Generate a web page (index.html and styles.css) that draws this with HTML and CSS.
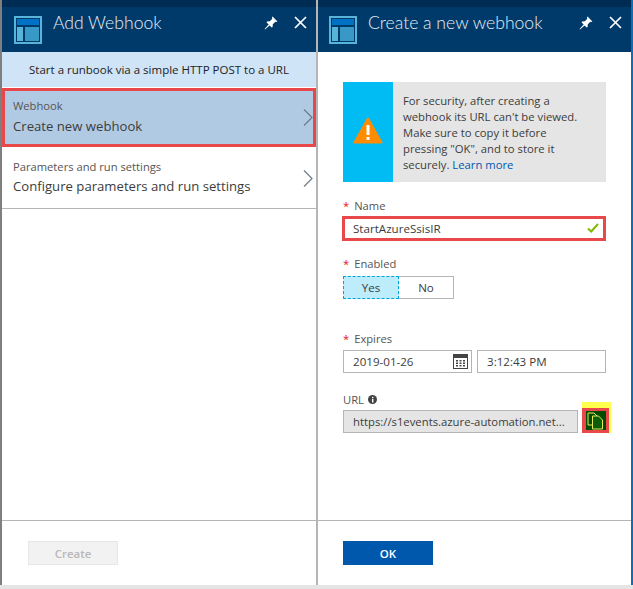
FILE: index.html
```html
<!DOCTYPE html>
<html lang="en">
<head>
<meta charset="UTF-8">
<meta name="viewport" content="width=device-width, initial-scale=1.0">
<title>Add Webhook</title>
<link rel="stylesheet" href="styles.css">
</head>
<body>

<div class="blades">
    <section class="blade blade-left">
        <header class="blade-header">
            <svg class="blade-icon" width="28" height="28" viewBox="0 0 28 28">
                <rect width="28" height="28" fill="#59b4d9"/>
                <rect x="2" y="2" width="24" height="24" fill="#003a6b"/>
                <rect x="3" y="3" width="22" height="6" fill="#0072c6"/>
                <rect x="3" y="11" width="6" height="14" fill="#59b4d9"/>
                <rect x="11" y="11" width="14" height="14" fill="#3999c6"/>
            </svg>
            <h1>Add Webhook</h1>
            <svg class="pin" width="14" height="14" viewBox="0 0 14 14"><path d="M8.600 .6 13.400 5.400 12.400 6.100 11.300 5.700 8.800 8.200 8.600 10.900 7.600 11.400 2.600 6.400 3.100 5.400 5.800 5.200 8.300 2.700 7.900 1.600ZM4.600 8.400 5.600 9.400 1 13.400 .6 13Z" fill="#fff"/></svg>
            <svg class="close" width="13" height="13" viewBox="0 0 13 13"><path d="M1 1 12 12M12 1 1 12" stroke="#fff" stroke-width="1.7"/></svg>
        </header>
        <div class="notice">Start a runbook via a simple HTTP POST to a URL</div>
        <a class="item item-selected">
            <div>
                <div class="item-label">Webhook</div>
                <div class="item-value">Create new webhook</div>
            </div>
            <svg class="chevron" width="10" height="17" viewBox="0 0 10 17"><path d="M1 .5 9 8.500 1 16.500" fill="none" stroke="#6e7b88" stroke-width="1.200"/></svg>
        </a>
        <a class="item">
            <div>
                <div class="item-label">Parameters and run settings</div>
                <div class="item-value">Configure parameters and run settings</div>
            </div>
            <svg class="chevron" width="10" height="17" viewBox="0 0 10 17"><path d="M1 .5 9 8.500 1 16.500" fill="none" stroke="#6e7b88" stroke-width="1.200"/></svg>
        </a>
        <div class="blade-spacer"></div>
        <footer class="blade-footer">
            <button type="button" class="btn btn-disabled">Create</button>
        </footer>
    </section>

    <section class="blade blade-right">
        <header class="blade-header">
            <svg class="blade-icon" width="28" height="28" viewBox="0 0 28 28">
                <rect width="28" height="28" fill="#59b4d9"/>
                <rect x="2" y="2" width="24" height="24" fill="#003a6b"/>
                <rect x="3" y="3" width="22" height="6" fill="#0072c6"/>
                <rect x="3" y="11" width="6" height="14" fill="#59b4d9"/>
                <rect x="11" y="11" width="14" height="14" fill="#3999c6"/>
            </svg>
            <h1>Create a new webhook</h1>
            <svg class="pin" width="14" height="14" viewBox="0 0 14 14"><path d="M8.600 .6 13.400 5.400 12.400 6.100 11.300 5.700 8.800 8.200 8.600 10.900 7.600 11.400 2.600 6.400 3.100 5.400 5.800 5.200 8.300 2.700 7.900 1.600ZM4.600 8.400 5.600 9.400 1 13.400 .6 13Z" fill="#fff"/></svg>
            <svg class="close" width="13" height="13" viewBox="0 0 13 13"><path d="M1 1 12 12M12 1 1 12" stroke="#fff" stroke-width="1.7"/></svg>
        </header>
        <div class="form">
            <div class="warning">
                <div class="warning-side">
                    <svg width="30" height="27" viewBox="0 0 30 27">
                        <path d="M15 1.500 28.500 25.500H1.500Z" fill="#ff8c00" stroke="#ff8c00" stroke-width="2" stroke-linejoin="round"/>
                        <rect x="13.500" y="8" width="3" height="10" fill="#fff"/>
                        <rect x="13.500" y="20" width="3" height="3" fill="#fff"/>
                    </svg>
                </div>
                <p>For security, after creating a webhook its URL can't be viewed. Make sure to copy it before pressing "OK", and to store it securely. <a href="#">Learn more</a></p>
            </div>

            <label class="field-label field-name"><span class="req">*</span>Name</label>
            <div class="name-input">
                <span>StartAzureSsisIR</span>
                <svg width="12" height="10" viewBox="0 0 12 10"><path d="M1 5.500 4.200 8.500 11 1" fill="none" stroke="#7fba00" stroke-width="2"/></svg>
            </div>

            <label class="field-label field-enabled"><span class="req">*</span>Enabled</label>
            <div class="toggle">
                <div class="toggle-on">Yes</div>
                <div class="toggle-off">No</div>
            </div>

            <label class="field-label field-expires"><span class="req">*</span>Expires</label>
            <div class="date-row">
                <div class="text-box">
                    <span>2019-01-26</span>
                    <svg width="15" height="15" viewBox="0 0 15 15">
                        <rect width="15" height="15" fill="#444"/>
                        <rect x="1" y="4" width="13" height="10" fill="#fff"/>
                        <path d="M3 6h2v1.500H3zM6.500 6h2v1.500h-2zM10 6h2v1.500h-2zM3 8.500h2V10H3zM6.500 8.500h2V10h-2zM10 8.500h2V10h-2zM3 11h2v1.500H3zM6.500 11h2v1.500h-2zM10 11h2v1.500h-2z" fill="#444"/>
                    </svg>
                </div>
                <div class="text-box"><span>3:12:43 PM</span></div>
            </div>

            <label class="field-label field-url">URL
                <svg class="info" width="9" height="9" viewBox="0 0 9 9"><circle cx="4.500" cy="4.500" r="4.500" fill="#444"/><rect x="4" y="4" width="1.400" height="3.500" fill="#fff"/><rect x="4" y="1.800" width="1.400" height="1.400" fill="#fff"/></svg>
            </label>
            <div class="url-row">
                <div class="url-box">https://s1events.azure-automation.net...</div>
                <div class="copy-mark">
                    <div class="copy-btn">
                        <svg width="20" height="19" viewBox="0 0 20 19">
                            <rect width="20" height="19" fill="#004b00"/>
                            <path d="M2 2H8L11 5V14H2Z" fill="#004b00" stroke="#e8e85a" stroke-width="1"/>
                            <path d="M6.500 5H12.500L16.500 9V18H6.500Z" fill="#0a5f0a" stroke="#e8e85a" stroke-width="1"/>
                        </svg>
                    </div>
                </div>
            </div>
            <div class="blade-spacer"></div>
        </div>
        <footer class="blade-footer">
            <button type="button" class="btn btn-primary">OK</button>
        </footer>
    </section>
</div>
<div class="bottom-strip"></div>

</body>
</html>
```

FILE: styles.css
```css
html, body {
  margin: 0;
  padding: 0;
  background-color: #fff;
}

body {
  width: 633px;
  height: 589px;
  overflow: hidden;
  font-family: "Open Sans", "Noto Sans", sans-serif;
  font-size: 12.5px;
  color: #3c3c3c;
}

.blades {
  display: flex;
  height: 585px;
  border-left: 2px solid #7f7f7f;
  border-right: 2px solid #0a6ebd;
  box-sizing: border-box;
}

.blade {
  display: flex;
  flex-direction: column;
  box-sizing: border-box;
}

.blade-left {
  width: 316px;
  border-right: 2px solid #b5b5b5;
}

.blade-right {
  width: 313px;
}

.blade-header {
  display: flex;
  align-items: center;
  height: 45px;
  border-top: 7px solid #002b52;
  background-color: #003a6b;
  color: #fff;
  padding: 0 9px 0 12px;
}

.blade-right .blade-header {
  padding-left: 11px;
}

.blade-header h1 {
  flex: 1;
  margin: 0 0 15px 11px;
  font-family: Lato, "Open Sans", sans-serif;
  font-size: 17.600px;
  font-weight: 300;
  color: #e6eef5;
}

.pin {
  margin: 0 16px 14px 0;
}

.close {
  margin-bottom: 14px;
}

.notice {
  height: 35px;
  line-height: 35px;
  text-align: center;
  background-color: #cfe4f6;
  color: #222;
  font-size: 11.500px;
  border-bottom: 1px solid #fff;
}

.item {
  display: flex;
  align-items: center;
  justify-content: space-between;
  box-sizing: border-box;
  height: 61px;
  padding: 0 3px 2px 11px;
  border-bottom: 1px solid #b5b5b5;
}

.item .chevron {
  margin-top: 2px;
}

.item-selected {
  height: 59px;
  background-color: #b1cae3;
  border: 3px solid #e8484a;
  padding: 0 0 2px 8px;
  margin-bottom: 1px;
}

.item-label {
  font-size: 11.200px;
  color: #555;
  margin-bottom: 3px;
}

.item-selected .item-label {
  margin-bottom: 4px;
}

.item-value {
  font-size: 13.150px;
  color: #3c3c3c;
}

.blade-spacer {
  flex: 1;
}

.blade-footer {
  height: 65px;
  box-sizing: border-box;
  border-top: 1px solid #b5b5b5;
  padding: 20px 0 0 26px;
}

.btn {
  display: block;
  width: 90px;
  height: 24px;
  padding: 0;
  font-family: inherit;
  font-size: 11.500px;
  font-weight: 600;
  border: 1px solid transparent;
}

.btn-disabled {
  background-color: #f2f2f2;
  border-color: #e6e6e6;
  color: #b8b8b8;
}

.btn-primary {
  background-color: #0058ad;
  color: #fff;
}

.blade-right .blade-footer {
  padding-left: 25px;
}

.form {
  flex: 1;
  display: flex;
  flex-direction: column;
  padding: 30px 25px 0 25px;
}

.warning {
  display: flex;
  width: 263px;
  height: 100px;
  background-color: #e5e5e5;
  flex: none;
}

.warning-side {
  width: 50px;
  flex: none;
  display: flex;
  align-items: center;
  justify-content: center;
  padding-bottom: 4px;
  box-sizing: border-box;
  background-color: #00bcf2;
}

.warning p {
  margin: 11px 24px 0 10px;
  line-height: 16px;
  font-size: 11.270px;
  color: #3c3c3c;
}

.warning a {
  color: #0058ad;
  text-decoration: none;
}

.field-label {
  display: block;
  height: 15px;
  line-height: 15px;
  font-size: 11.200px;
  color: #555;
}

.req {
  color: #e81123;
  margin-right: 5px;
}

.field-name {
  margin-top: 16px;
}

.field-enabled {
  margin-top: 15px;
}

.field-expires {
  margin-top: 32px;
}

.field-url {
  margin-top: 19px;
}

.info {
  margin-left: 1px;
}

.name-input {
  display: flex;
  align-items: center;
  justify-content: space-between;
  box-sizing: border-box;
  width: 264px;
  height: 25px;
  margin: 3px 0 0 -1px;
  padding: 0 4px 1px 8px;
  border: 3px solid #e8484a;
  color: #3c3c3c;
  font-size: 11.600px;
}

.toggle {
  display: flex;
  width: 111px;
  height: 23px;
  margin-top: 5px;
  line-height: 21px;
  text-align: center;
  font-size: 11.600px;
}

.toggle-on {
  width: 56px;
  box-sizing: border-box;
  background-color: #bdecfa;
  border: 1px dashed #00a4d8;
}

.toggle-off {
  flex: 1;
  border: 1px solid #b5b5b5;
  border-left: none;
}

.date-row {
  display: flex;
  gap: 5px;
  width: 263px;
  margin-top: 4px;
}

.text-box {
  flex: 1;
  display: flex;
  align-items: center;
  justify-content: space-between;
  box-sizing: border-box;
  height: 23px;
  padding: 0 3px 1px 9px;
  border: 1px solid #b5b5b5;
  font-size: 11.600px;
}

.url-row {
  display: flex;
  align-items: flex-end;
  gap: 4px;
  margin-top: 3px;
}

.url-box {
  flex: none;
  box-sizing: border-box;
  width: 235px;
  height: 23px;
  line-height: 21px;
  padding-left: 9px;
  white-space: nowrap;
  background-color: #e5e5e5;
  border: 1px solid #b5b5b5;
  font-size: 11.300px;
}

.copy-mark {
  flex: none;
  margin-top: -8px;
  padding: 6px 2px 0 0;
  background-color: #ffff4d;
}

.copy-btn {
  display: flex;
  border: 3px solid #e8484a;
  border-left-width: 4px;
}

.copy-btn svg {
  display: block;
}

.bottom-strip {
  height: 4px;
  background-color: #e5e5e5;
}
```
